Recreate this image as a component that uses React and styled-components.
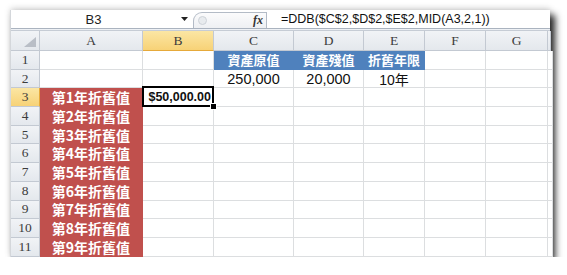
import React from 'react';
import styled, { createGlobalStyle } from 'styled-components';

const GlobalStyle = createGlobalStyle`
  body {
    margin: 0;
    background: #ffffff;
    font-family: "Liberation Sans", "Noto Sans CJK TC", sans-serif;
  }
`

const Window = styled.div`
  margin: 10px 0 0 10px;
  width: 540px;
  background: #ffffff;
  border-left: 1px solid #d4d7db;
  box-sizing: border-box;
  box-shadow: 5px 5px 7px rgba(0, 0, 0, 0.85), 0 -2px 6px rgba(0, 0, 0, 0.15);
`

const FormulaBar = styled.div`
  display: flex;
  align-items: stretch;
  height: 18px;
  background: #ffffff;
`

const NameBox = styled.div`
  display: flex;
  align-items: center;
  justify-content: center;
  width: 165px;
  font-size: 13px;
  color: #222;
`

const Dropdown = styled.div`
  display: flex;
  align-items: center;
  justify-content: center;
  width: 17px;
`

const Pill = styled.div`
  display: flex;
  align-items: center;
  justify-content: space-between;
  width: 74px;
  margin-top: 2px;
  padding: 0 3px 0 4px;
  box-sizing: border-box;
  border: 1px solid #b3bbc6;
  border-bottom: none;
  border-radius: 9px 0 0 0;
  background: linear-gradient(#fbfbfc, #eef0f3);
`

const Knob = styled.span`
  width: 7px;
  height: 7px;
  border-radius: 50%;
  border: 1px solid #cdd2d8;
  background: #e8ebee;
`

const Fx = styled.span`
  font-family: "Liberation Serif", serif;
  font-style: italic;
  font-weight: bold;
  font-size: 12px;
  color: #333;
`

const Formula = styled.div`
  display: flex;
  align-items: center;
  padding-left: 14px;
  font-size: 12.5px;
  color: #111;
`

const Divider = styled.div`
  height: 1px;
  border-top: 1px solid #aab3bf;
  border-bottom: 1px solid #c6ccd5;
  background: #eef1f5;
`

const Sheet = styled.div`
  display: grid;
  grid-template-columns: 29px 103px 71px 80px 70px 61px 61px 62px 3px;
  grid-template-rows: 20px repeat(11, 18.7px);
`

const Header = styled.div`
  display: flex;
  align-items: center;
  justify-content: center;
  box-sizing: border-box;
  font-family: "Liberation Serif", serif;
  font-size: 13.5px;
  color: #3c3c3c;
  background: ${p => p.$active
    ? 'linear-gradient(#fbe6a4, #f7d277)'
    : 'linear-gradient(#f1f3f6, #e4e8ed)'};
  border-right: 1px solid ${p => p.$active && p.$row ? '#e6a93a' : '#c3c9d2'};
  border-bottom: 1px solid ${p => p.$active && !p.$row ? '#e6a93a' : '#c3c9d2'};
`

const Corner = styled(Header)`
  align-items: flex-end;
  justify-content: flex-end;
  padding: 0 3px 3px 0;
`

const Cell = styled.div`
  position: relative;
  display: flex;
  align-items: center;
  justify-content: ${p => p.$align || 'center'};
  box-sizing: border-box;
  padding: 0 2px;
  white-space: nowrap;
  background: ${p => p.$fill || '#ffffff'};
  color: ${p => p.$fill ? '#ffffff' : '#111111'};
  font-family: ${p => p.$cjk ? '"Noto Sans CJK TC", sans-serif' : '"Liberation Sans", "Noto Sans CJK TC", sans-serif'};
  font-weight: ${p => p.$bold ? 700 : 400};
  font-size: ${p => p.$size || 14}px;
  border-right: 1px solid ${p => p.$fill || '#dcdee0'};
  border-bottom: 1px solid ${p => p.$fill || '#dcdee0'};
`

const Selected = styled(Cell)`
  &::after {
    content: '';
    position: absolute;
    top: -2px;
    left: -1px;
    right: -1px;
    bottom: -1px;
    border: 2px solid #000;
  }
`

const Handle = styled.span`
  position: absolute;
  right: -4px;
  bottom: -4px;
  width: 5px;
  height: 5px;
  background: #000;
  border: 1px solid #fff;
  z-index: 1;
`

const columns = ['A', 'B', 'C', 'D', 'E', 'F', 'G', '']

const cellFor = (row, col) => {
  const blue = '#4f81bd'
  const red = '#c0504d'
  if (row === 1 && col === 'C') return { text: '資產原值', fill: blue, bold: true, cjk: true, size: 13 }
  if (row === 1 && col === 'D') return { text: '資產殘值', fill: blue, bold: true, cjk: true, size: 13 }
  if (row === 1 && col === 'E') return { text: '折舊年限', fill: blue, bold: true, cjk: true, size: 13 }
  if (row === 2 && col === 'C') return { text: '250,000', size: 14.5 }
  if (row === 2 && col === 'D') return { text: '20,000', size: 14.5 }
  if (row === 2 && col === 'E') return { text: '10年', size: 14 }
  if (row >= 3 && col === 'A') return { text: `第${row - 2}年折舊值`, fill: red, bold: true, cjk: true, size: 14 }
  return { text: '' }
}

const App = () => {
  const rows = Array.from({ length: 11 }, (_, i) => i + 1)

  return (
    <>
      <GlobalStyle />
      <Window>
        <FormulaBar>
          <NameBox>B3</NameBox>
          <Dropdown>
            <svg width="7" height="4" viewBox="0 0 7 4">
              <path d="M0 0 H7 L3.5 4 Z" fill="#222" />
            </svg>
          </Dropdown>
          <Pill>
            <Knob />
            <Fx>fx</Fx>
          </Pill>
          <Formula>=DDB($C$2,$D$2,$E$2,MID(A3,2,1))</Formula>
        </FormulaBar>
        <Divider />
        <Sheet>
          <Corner>
            <svg width="12" height="10" viewBox="0 0 12 10">
              <path d="M12 0 V10 H0 Z" fill="#b9bec6" />
            </svg>
          </Corner>
          {columns.map((c, i) => (
            <Header key={i} $active={c === 'B'}>{c}</Header>
          ))}
          {rows.map(r => (
            <React.Fragment key={r}>
              <Header $row $active={r === 3}>{r}</Header>
              {columns.map((c, i) => {
                if (r === 3 && c === 'B') {
                  return (
                    <Selected key={i} $align="flex-end" $bold $size={12.5}>
                      $50,000.00
                      <Handle />
                    </Selected>
                  )
                }
                const cell = cellFor(r, c)
                return (
                  <Cell
                    key={i}
                    $fill={cell.fill}
                    $bold={cell.bold}
                    $cjk={cell.cjk}
                    $size={cell.size}
                  >
                    {cell.text}
                  </Cell>
                )
              })}
            </React.Fragment>
          ))}
        </Sheet>
      </Window>
    </>
  )
}

export default App;
